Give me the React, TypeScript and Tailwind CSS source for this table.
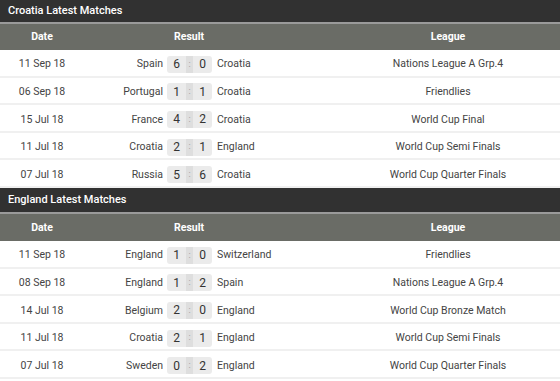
const croatia = [
  { date: "11 Sep 18", home: "Spain", hs: 6, as: 0, away: "Croatia", league: "Nations League A Grp.4" },
  { date: "06 Sep 18", home: "Portugal", hs: 1, as: 1, away: "Croatia", league: "Friendlies" },
  { date: "15 Jul 18", home: "France", hs: 4, as: 2, away: "Croatia", league: "World Cup Final" },
  { date: "11 Jul 18", home: "Croatia", hs: 2, as: 1, away: "England", league: "World Cup Semi Finals" },
  { date: "07 Jul 18", home: "Russia", hs: 5, as: 6, away: "Croatia", league: "World Cup Quarter Finals" },
];

const england = [
  { date: "11 Sep 18", home: "England", hs: 1, as: 0, away: "Switzerland", league: "Friendlies" },
  { date: "08 Sep 18", home: "England", hs: 1, as: 2, away: "Spain", league: "Nations League A Grp.4" },
  { date: "14 Jul 18", home: "Belgium", hs: 2, as: 0, away: "England", league: "World Cup Bronze Match" },
  { date: "11 Jul 18", home: "Croatia", hs: 2, as: 1, away: "England", league: "World Cup Semi Finals" },
  { date: "07 Jul 18", home: "Sweden", hs: 0, as: 2, away: "England", league: "World Cup Quarter Finals" },
];

type Match = (typeof croatia)[number];

function Section({ title, matches, first }: { title: string; matches: Match[]; first?: boolean }) {
  return (
    <div>
      <div
        className={`flex items-center px-[8px] bg-[#313131] border-b-2 border-[#9a9a9a] text-white text-[11px] font-medium ${
          first ? "h-[24px]" : "h-[26px]"
        }`}
      >
        {title}
      </div>
      <div
        className={`flex items-center bg-[#6a6c66] text-white text-[10.5px] font-bold ${
          first ? "h-[26px]" : "h-[27px]"
        }`}
      >
        <div className="w-[84px] text-center">Date</div>
        <div className="w-[210px] text-center">Result</div>
        <div className="w-[42px]" />
        <div className="w-[224px] text-center">League</div>
      </div>
      {matches.map((m) => (
        <div
          key={m.date + m.home}
          className="flex items-center h-[27.6px] pt-[3px] border-b-2 border-[#f0f0f0] bg-white text-[#444] text-[10.5px]"
        >
          <div className="w-[84px] text-center">{m.date}</div>
          <div className="w-[210px] flex items-center">
            <span className="w-[79px] text-right">{m.home}</span>
            <span className="ml-[4px] flex items-center h-[17px] w-[45px] rounded-[3px] bg-[#ebebeb] overflow-hidden text-[12px] text-[#333]">
              <span className="flex-1 text-center">{m.hs}</span>
              <span className="w-[7px] h-full flex items-center justify-center bg-[#dedede] text-[9px] text-[#999]">:</span>
              <span className="flex-1 text-center">{m.as}</span>
            </span>
            <span className="ml-[5px]">{m.away}</span>
          </div>
          <div className="w-[42px]" />
          <div className="w-[224px] text-center">{m.league}</div>
        </div>
      ))}
    </div>
  );
}

export default function App() {
  return (
    <div className="w-[560px] h-[381px] overflow-hidden bg-white font-['Roboto',sans-serif]">
      <Section title="Croatia Latest Matches" matches={croatia} first />
      <Section title="England Latest Matches" matches={england} />
    </div>
  );
}
